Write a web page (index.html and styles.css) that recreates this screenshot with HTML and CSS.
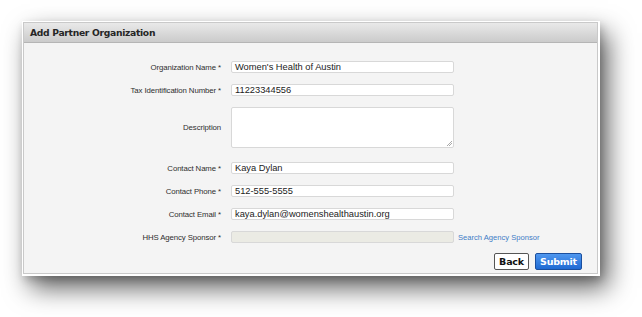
FILE: index.html
```html
<!DOCTYPE html>
<html lang="en">
<head>
    <meta charset="UTF-8">
    <title>Add Partner Organization</title>
    <link rel="stylesheet" href="styles.css">
</head>
<body>
    <!-- panel frame -->
    <div class="frame">
        <div class="panel">
            <div class="panel-header">Add Partner Organization</div>

            <div class="panel-body">
                <div class="form-row">
                    <label class="form-label">Organization Name *</label>
                    <div class="form-input">Women's Health of Austin</div>
                </div>
                <div class="form-row">
                    <label class="form-label">Tax Identification Number *</label>
                    <div class="form-input">11223344556</div>
                </div>
                <div class="form-row row-tall">
                    <label class="form-label">Description</label>
                    <div class="form-input form-textarea"><span class="grip"></span></div>
                </div>
                <div class="form-row">
                    <label class="form-label">Contact Name *</label>
                    <div class="form-input">Kaya Dylan</div>
                </div>
                <div class="form-row">
                    <label class="form-label">Contact Phone *</label>
                    <div class="form-input">512-555-5555</div>
                </div>
                <div class="form-row">
                    <label class="form-label">Contact Email *</label>
                    <div class="form-input">kaya.dylan@womenshealthaustin.org</div>
                </div>
                <div class="form-row">
                    <label class="form-label">HHS Agency Sponsor *</label>
                    <div class="form-input form-disabled"></div>
                    <a class="search-link" href="#">Search Agency Sponsor</a>
                </div>

                <div class="button-row">
                    <button class="btn btn-back">Back</button>
                    <button class="btn btn-submit">Submit</button>
                </div>
            </div>
        </div>
    </div>
</body>
</html>
```

FILE: styles.css
```css
* {
    margin: 0;
    padding: 0;
    box-sizing: border-box;
}

html, body {
    width: 100%;
    height: 100%;
}

body {
    background-color: #ffffff;
    font-family: 'Liberation Sans', Arial, sans-serif;
    padding-top: 21px;
}

/* white frame with drop shadow */
.frame {
    width: 578px;
    margin-left: 22px;
    padding: 1px 2px 2px 1px;
    background-color: #ffffff;
    box-shadow: 8px 12px 24px rgba(0, 0, 0, 0.62), 2px 4px 8px rgba(0, 0, 0, 0.18);
}

.panel {
    border: 1px solid #c9c9c9;
    background-color: #f4f4f4;
}

.panel-header {
    height: 20px;
    padding: 4px 0 0 6px;
    background: linear-gradient(#e9e9e9, #cbcbcb);
    border-bottom: 1px solid #b5b5b5;
    font-family: 'DejaVu Sans', Verdana, sans-serif;
    font-weight: bold;
    font-size: 9.2px;
    letter-spacing: -0.3px;
    color: #262626;
}

.panel-body {
    padding: 18px 15px 3px 0;
}

/* form rows */
.form-row {
    display: flex;
    align-items: center;
    margin-bottom: 11px;
}

.row-tall {
    margin-bottom: 14px;
}

.form-label {
    width: 197px;
    text-align: right;
    font-size: 7.8px;
    letter-spacing: -0.1px;
    color: #2e2e2e;
    margin-right: 10px;
}

.form-input {
    position: relative;
    width: 223px;
    height: 12px;
    padding: 0 3px;
    background-color: #ffffff;
    border: 1px solid #d8d8d8;
    border-radius: 2px;
    font-size: 9.3px;
    line-height: 10px;
    color: #222222;
    white-space: nowrap;
}

.form-textarea {
    height: 41px;
}

.grip {
    position: absolute;
    right: 1px;
    bottom: 1px;
    width: 5px;
    height: 5px;
    background: linear-gradient(135deg, transparent 45%, #aaaaaa 45%, #aaaaaa 55%, transparent 55%, transparent 70%, #aaaaaa 70%, #aaaaaa 80%, transparent 80%);
}

.form-disabled {
    background-color: #ebebe4;
}

.search-link {
    margin-left: 4px;
    font-size: 7.6px;
    color: #3f7cc6;
    text-decoration: none;
}

/* buttons */
.button-row {
    display: flex;
    justify-content: flex-end;
    gap: 6px;
    margin-top: -1px;
}

.btn {
    height: 17px;
    border-radius: 2px;
    font-family: 'DejaVu Sans', Verdana, sans-serif;
    font-weight: bold;
    font-size: 9.5px;
    letter-spacing: -0.2px;
}

.btn-back {
    width: 35px;
    background-color: #ffffff;
    border: 1px solid #555555;
    color: #111111;
}

.btn-submit {
    width: 47px;
    background: linear-gradient(#4f97ef, #1f6ad3);
    border: 1px solid #1b4f9e;
    color: #ffffff;
}
```
